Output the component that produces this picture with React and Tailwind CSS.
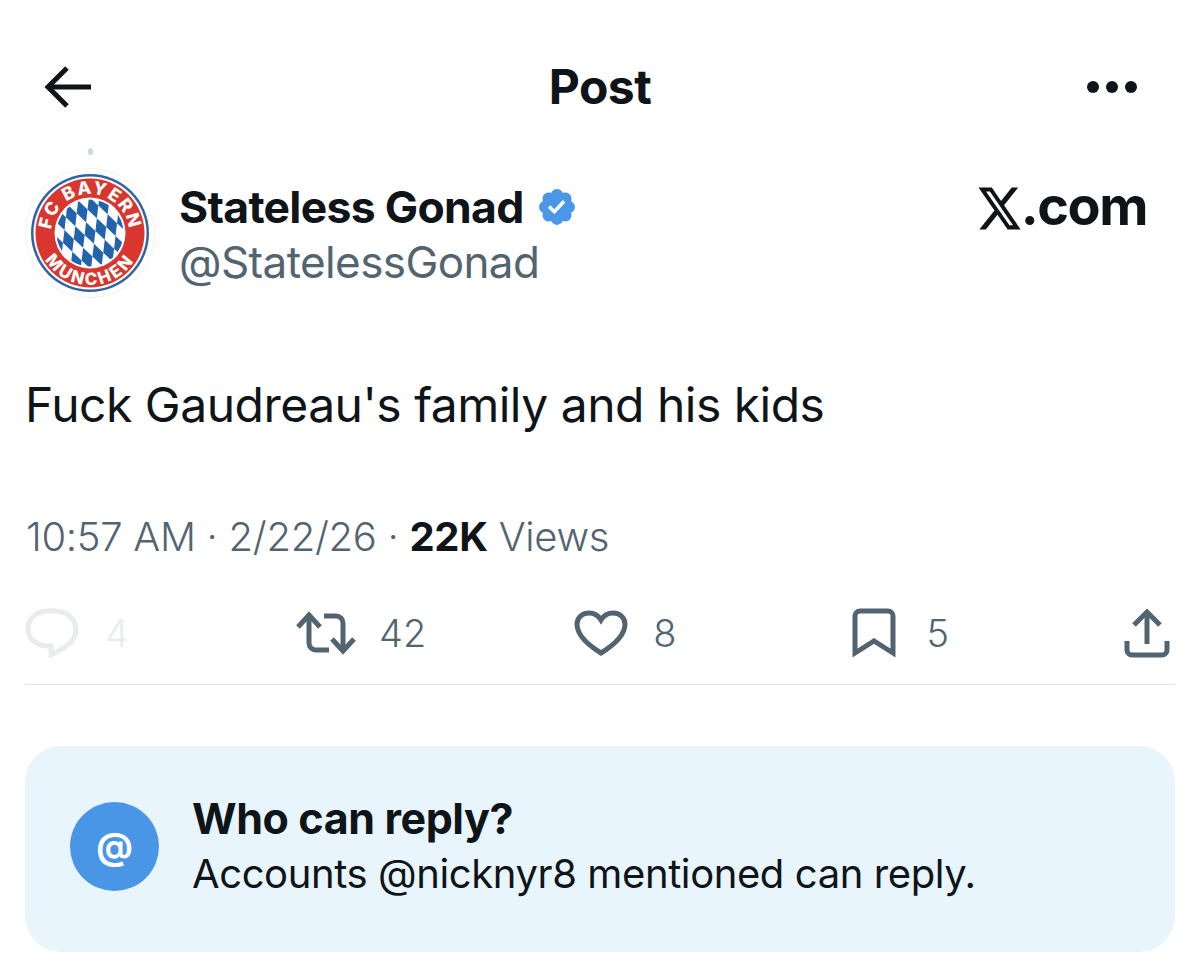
const FONT = "font-['Inter','Liberation_Sans',sans-serif]";

// blue lozenges of the crest, white shows through between them
const crestDiamonds = () => {
  const w = 11.5;
  const h = 23;
  const items = [];
  for (let row = -4; row <= 4; row++) {
    for (let col = -6; col <= 6; col++) {
      const cx = col * w;
      const cy = row * h;
      items.push(`${cx},${cy - h / 2} ${cx + w / 2},${cy} ${cx},${cy + h / 2} ${cx - w / 2},${cy}`);
    }
  }
  return items;
};

const Crest = () => (
  <svg width="130" height="130" viewBox="0 0 130 130" className="shrink-0">
    <defs>
      <clipPath id="inner">
        <circle cx="65" cy="65" r="33.5" />
      </clipPath>
      <path id="arcTop" d="M 26 65 A 39 39 0 0 1 104 65" />
      <path id="arcBottom" d="M 13 65 A 52 52 0 0 0 117 65" />
    </defs>
    <circle cx="65" cy="65" r="64.5" fill="#fff" stroke="#f2f2f0" strokeWidth="1" />
    <circle cx="65" cy="65" r="59" fill="#2f65a5" />
    <circle cx="65" cy="65" r="56.5" fill="#fff" />
    <circle cx="65" cy="65" r="54.5" fill="#d9362f" />
    <circle cx="65" cy="65" r="35.5" fill="#fff" />
    <g clipPath="url(#inner)">
      <g transform="translate(65 65) rotate(-20)">
        {crestDiamonds().map((points, i) => (
          <polygon key={i} points={points} fill="#2164ad" />
        ))}
      </g>
    </g>
    <text fill="#fff" fontSize="18" fontWeight="800" fontFamily="Inter, sans-serif" letterSpacing="1.5">
      <textPath href="#arcTop" startOffset="50%" textAnchor="middle">FC BAYERN</textPath>
    </text>
    <text fill="#fff" fontSize="17" fontWeight="800" fontFamily="Inter, sans-serif" letterSpacing="2.5">
      <textPath href="#arcBottom" startOffset="50%" textAnchor="middle">MUNCHEN</textPath>
    </text>
  </svg>
);

const Stat = ({ className, gap, count, countClass = 'text-[#536471]', children }) => (
  <div className={`flex items-center ${className}`}>
    {children}
    {count && (
      <span className={`text-[38px] leading-none font-light ${gap} ${countClass}`}>{count}</span>
    )}
  </div>
);

const App = () => {
  return (
    <div className={`w-[1200px] h-[972px] bg-white overflow-hidden flex flex-col px-[25px] text-[#0f1419] ${FONT}`}>
      {/* Header */}
      <header className="mt-[56px] h-[62px] shrink-0 grid grid-cols-3 items-center pl-[19px] pr-[38px]">
        <svg width="48" height="42" viewBox="0 0 48 42" fill="none" stroke="#0f1419" strokeWidth="5">
          <path d="M47 21H4" />
          <path d="M23 2 4 21l19 19" />
        </svg>
        <h1 className="text-[48px] leading-none font-bold tracking-[-0.5px] text-center pl-[19px]">Post</h1>
        <div className="flex gap-[7px] justify-end">
          <span className="w-[12px] h-[12px] rounded-full bg-[#0f1419]"></span>
          <span className="w-[12px] h-[12px] rounded-full bg-[#0f1419]"></span>
          <span className="w-[12px] h-[12px] rounded-full bg-[#0f1419]"></span>
        </div>
      </header>

      {/* Thread stub */}
      <div className="mt-[30px] ml-[63px] w-[5px] h-[7px] shrink-0 rounded-sm bg-[#cfd9de]"></div>

      {/* Author */}
      <div className="mt-[13px] flex items-start shrink-0">
        <Crest />
        <div className="ml-[24px] flex flex-col">
          <div className="mt-[14px] flex items-center h-[50px]">
            <span className="text-[44.5px] leading-none font-bold tracking-[-0.7px]">Stateless Gonad</span>
            <svg width="42" height="42" viewBox="0 0 24 24" fill="#4a97e8" className="ml-[12px]">
              <path d="M22.25 12c0-1.43-.88-2.67-2.19-3.34.46-1.39.2-2.9-.81-3.91s-2.52-1.27-3.91-.81c-.66-1.31-1.91-2.19-3.34-2.19s-2.67.88-3.33 2.19c-1.4-.46-2.91-.2-3.92.81s-1.26 2.52-.8 3.91c-1.31.67-2.2 1.91-2.2 3.34s.89 2.67 2.2 3.34c-.46 1.39-.21 2.9.8 3.91s2.52 1.26 3.91.81c.67 1.31 1.91 2.19 3.34 2.19s2.68-.88 3.34-2.19c1.39.45 2.9.2 3.91-.81s1.27-2.52.81-3.91c1.31-.67 2.19-1.91 2.19-3.34zm-11.71 4.2L6.8 12.46l1.41-1.42 2.26 2.26 4.8-5.23 1.47 1.36-6.2 6.77z" />
            </svg>
          </div>
          <span className="mt-[5px] text-[44px] leading-[50px] font-normal text-[#536471] tracking-[-0.6px]">@StatelessGonad</span>
        </div>
        <div className="ml-auto mt-[14px] mr-[28px] flex items-end h-[48px]">
          <svg width="43" height="43" viewBox="1 2 22 20" preserveAspectRatio="none" fill="#0f1419">
            <path d="M18.244 2.25h3.308l-7.227 8.26 8.502 11.24H16.17l-5.214-6.817L4.99 21.75H1.68l7.73-8.835L1.254 2.25H8.08l4.713 6.231zm-1.161 17.52h1.833L7.084 4.126H5.117z" />
          </svg>
          <span className="text-[54px] leading-[48px] font-bold tracking-[-1.5px]">.com</span>
        </div>
      </div>

      {/* Tweet */}
      <p className="mt-[80px] text-[48px] leading-[54px] tracking-[-0.5px] shrink-0">Fuck Gaudreau's family and his kids</p>

      {/* Meta */}
      <p className="mt-[80px] ml-[1px] text-[40px] leading-[50px] text-[#536471] font-light tracking-[-0.3px] shrink-0">
        10:57 AM · 2/22/26 · <span className="font-bold text-[#0f1419]">22K</span> Views
      </p>

      {/* Actions */}
      <div className="mt-[46px] h-[50px] flex items-center shrink-0">
        <Stat gap="ml-[26px]" count="4" countClass="text-[#e8ecee]" className="w-[108px]">
          <svg width="54" height="50" viewBox="0 0 54 50" fill="none" stroke="#e8ecee" strokeWidth="5">
            <path d="M23 3h7c12 0 21 8 21 19 0 8-5 13-11 17l-14 8v-9h-3C12 38 3 31 3 21 3 11 11 3 23 3Z" />
          </svg>
        </Stat>
        <Stat gap="ml-[23px]" count="42" className="ml-[163px]">
          <svg width="60" height="44" viewBox="0 0 60 44" fill="none" stroke="#536471" strokeWidth="5">
            <path d="M13 5v27a7 7 0 0 0 7 7h13" />
            <path d="M2 16 13 4l11 12" />
            <path d="M28 5h12a7 7 0 0 1 7 7v27" />
            <path d="M36 28l11 12 11-12" />
          </svg>
        </Stat>
        <Stat gap="ml-[25px]" count="8" className="ml-[148px]">
          <svg width="54" height="46" viewBox="0 0 54 46" fill="none" stroke="#536471" strokeWidth="5">
            <path d="M27 43C14 35 3 25 3 14 3 7 9 3 15 3c5 0 9 2 12 7 3-5 7-7 12-7 6 0 12 4 12 11 0 11-11 21-24 29Z" />
          </svg>
        </Stat>
        <Stat gap="ml-[30px]" count="5" className="ml-[176px]">
          <svg width="44" height="50" viewBox="0 0 44 50" fill="none" stroke="#536471" strokeWidth="5">
            <path d="M3 45V8a5 5 0 0 1 5-5h28a5 5 0 0 1 5 5v37L22 33Z" />
          </svg>
        </Stat>
        <svg width="46" height="50" viewBox="0 0 46 50" fill="none" stroke="#536471" strokeWidth="5" className="ml-auto mr-[5px]">
          <path d="M23 36V5" />
          <path d="M10 17 23 4l13 13" />
          <path d="M3 33v9a5 5 0 0 0 5 5h30a5 5 0 0 0 5-5v-9" />
        </svg>
      </div>

      {/* Divider */}
      <div className="mt-[26px] h-[1px] shrink-0 bg-[#e3e5e6]"></div>

      {/* Who can reply */}
      <div className="mt-[61px] h-[206px] shrink-0 rounded-[36px] bg-[#e9f5fc] flex items-center pl-[45px] pb-[6px]">
        <div className="w-[89px] h-[89px] rounded-full bg-[#4a96e6] flex items-center justify-center shrink-0">
          <span className="text-white text-[36px] leading-none font-bold">@</span>
        </div>
        <div className="ml-[33px] flex flex-col">
          <span className="text-[43px] leading-[50px] font-bold tracking-[-0.4px]">Who can reply?</span>
          <span className="mt-[6px] text-[40px] leading-[50px] tracking-[-0.4px]">Accounts @nicknyr8 mentioned can reply.</span>
        </div>
      </div>
    </div>
  );
};

export default App;
